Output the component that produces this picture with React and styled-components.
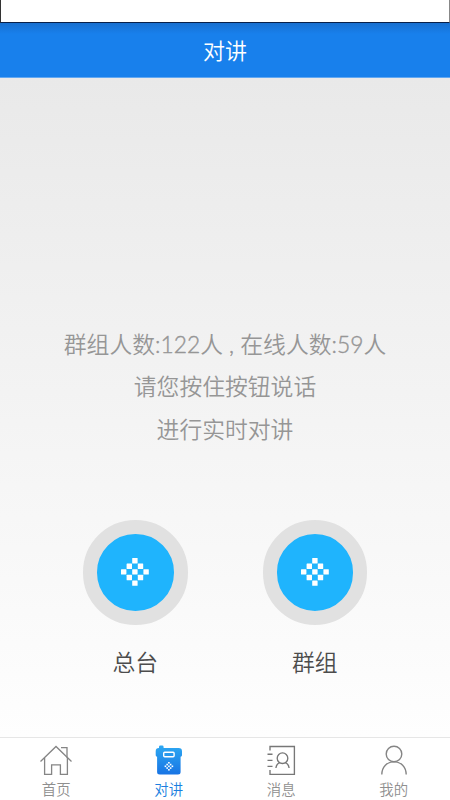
import { useState } from "react";
import styled, { createGlobalStyle } from "styled-components";

const GlobalStyle = createGlobalStyle`
  * {
    box-sizing: border-box;
  }
  body {
    margin: 0;
    font-family: "Noto Sans CJK SC DemiLight", "Noto Sans CJK SC", sans-serif;
    font-weight: 350;
  }
`;

const Wrap = styled.div`
  height: 800px;
  display: flex;
  flex-direction: column;
  overflow: hidden;
`;

const StatusBar = styled.div`
  height: 23px;
  flex-shrink: 0;
  background-color: #fff;
  border-left: 1px solid #333;
  border-right: 1px solid #888;
  border-bottom: 1px solid #08204a;
`;

const Header = styled.header`
  height: 55px;
  flex-shrink: 0;
  display: flex;
  justify-content: center;
  align-items: center;
  padding-bottom: 2px;
  background: linear-gradient(#176fd0, #1880ec 11px);
  border-bottom: 1px solid #62a8f2;
  h1 {
    margin: 0;
    color: white;
    font-size: 22px;
    font-weight: 350;
    line-height: 32px;
  }
`;

const Main = styled.main`
  flex: 1;
  display: flex;
  flex-direction: column;
  align-items: center;
  padding-top: 245px;
  background: linear-gradient(#e9e9e9, #fefefe);
`;

const Notice = styled.div`
  text-align: center;
  color: #969696;
  font-size: 22.8px;
  line-height: 42px;
  white-space: pre;
  p {
    margin: 0;
  }
  p:last-child {
    margin-top: 1px;
  }
`;

// 숫자와 문장부호용
const Latin = styled.span`
  font-family: Lato, "Noto Sans CJK SC", sans-serif;
  font-weight: 300;
  -webkit-text-stroke: 0.4px #969696;
`;

const Buttons = styled.div`
  display: flex;
  gap: 75px;
  margin-top: 70px;
`;

const TalkItem = styled.div`
  display: flex;
  flex-direction: column;
  align-items: center;
  span {
    margin-top: 20px;
    color: #4c4c4c;
    font-size: 22.8px;
    line-height: 34px;
  }
`;

const TalkButton = styled.button`
  width: 104.5px;
  height: 104.5px;
  padding: 0;
  border: 14px solid #e1e1e1;
  border-radius: 50%;
  background-color: #1fb4fd;
  display: flex;
  justify-content: center;
  align-items: center;
`;

const TabBar = styled.nav`
  height: 63px;
  flex-shrink: 0;
  display: grid;
  grid-template-columns: repeat(4, 1fr);
  background-color: #fff;
  border-top: 1px solid #e6e6e6;
`;

const Tab = styled.button`
  padding: 6px 0 0;
  border: 0;
  background: none;
  display: flex;
  flex-direction: column;
  align-items: center;
  font-family: inherit;
  font-weight: 350;
  font-size: 14.4px;
  line-height: 20px;
  color: ${(props) => (props.$active ? "#1b7fe0" : "#8f8f8f")};
  svg {
    margin-bottom: 3px;
    flex-shrink: 0;
  }
`;

// 마름모 모양 스피커 점
const dots = [
  [2, 0],
  [1, 1],
  [3, 1],
  [0, 2],
  [2, 2],
  [4, 2],
  [1, 3],
  [3, 3],
  [2, 4],
];

const SpeakerIcon = () => (
  <svg width="30" height="30" viewBox="0 0 30 30" fill="#fff">
    {dots.map(([x, y]) => (
      <rect
        key={`${x}${y}`}
        x={1 + x * 5.6}
        y={1 + y * 5.6}
        width="5.4"
        height="5.4"
        rx="0.5"
      />
    ))}
  </svg>
);

const HomeIcon = () => (
  <svg width="34" height="32" viewBox="0 0 34 32" fill="none" stroke="#858585" strokeWidth="1.3">
    <path d="M1.5 17.5 17 2.5l15.5 15" />
    <path d="M22 3.7h6v10" />
    <path d="M5.6 14v16.3h7V20.8h8.8v9.5h7V14" />
  </svg>
);

const RadioIcon = () => (
  <svg width="34" height="32" viewBox="0 0 34 32">
    <defs>
      <linearGradient id="radio" x1="0" y1="0" x2="0" y2="1">
        <stop offset="0" stopColor="#2da8f2" />
        <stop offset="1" stopColor="#1874e4" />
      </linearGradient>
    </defs>
    <path
      d="M7 4V3q0-1.4 1.4-1.4h1.8q1.4 0 1.4 1.4v1h15q3.4 0 3.4 3.2v4q0 1.2-1.4 1.6V28q0 2.5-2.6 2.5H7.7Q5.1 30.5 5.1 28V12.8Q3.7 12.4 3.7 11.2v-4Q3.7 4 7 4Z"
      fill="url(#radio)"
    />
    <rect x="11.7" y="8.2" width="10.4" height="4.5" rx="1" fill="none" stroke="#fff" strokeWidth="1.4" />
    {dots.map(([x, y]) => (
      <rect
        key={`${x}${y}`}
        x={12.6 + x * 1.75}
        y={18 + y * 1.75}
        width="1.6"
        height="1.6"
        fill="#fff"
      />
    ))}
  </svg>
);

const ContactIcon = () => (
  <svg width="34" height="32" viewBox="0 0 34 32" fill="none" stroke="#777" strokeWidth="1.35">
    <path d="M6 6.5v-4h24.4v27.8H6V26" />
    <path d="M3.5 10.2h5M3.5 16.3h5M3.5 22.4h5" />
    <circle cx="18.5" cy="14.2" r="5.3" />
    <path d="M11.9 24q.8-4.8 4.2-5.4M20.9 18.6q3.4.6 4.2 5.4" />
  </svg>
);

const UserIcon = () => (
  <svg width="34" height="32" viewBox="0 0 34 32" fill="none" stroke="#858585" strokeWidth="1.4">
    <circle cx="17" cy="10" r="7.8" />
    <path d="M4.8 30.5C5 22.5 10 17.9 17 17.9S29 22.5 29.2 30.5" />
  </svg>
);

const tabs = [
  { name: "首页", Icon: HomeIcon },
  { name: "对讲", Icon: RadioIcon },
  { name: "消息", Icon: ContactIcon },
  { name: "我的", Icon: UserIcon },
];

const App = () => {
  const [active, setActive] = useState("对讲"); // 선택된 탭

  return (
    <Wrap>
      <GlobalStyle />
      <StatusBar />
      <Header>
        <h1>对讲</h1>
      </Header>
      <Main>
        <Notice>
          <p>
            群组人数<Latin>:122</Latin>人<Latin> , </Latin>在线人数
            <Latin>:59</Latin>人
          </p>
          <p>请您按住按钮说话</p>
          <p>进行实时对讲</p>
        </Notice>
        <Buttons>
          {["总台", "群组"].map((name) => (
            <TalkItem key={name}>
              <TalkButton aria-label={name}>
                <SpeakerIcon />
              </TalkButton>
              <span>{name}</span>
            </TalkItem>
          ))}
        </Buttons>
      </Main>
      <TabBar>
        {tabs.map(({ name, Icon }) => (
          <Tab key={name} $active={name === active} onClick={() => setActive(name)}>
            <Icon />
            {name}
          </Tab>
        ))}
      </TabBar>
    </Wrap>
  );
};

export default App;
